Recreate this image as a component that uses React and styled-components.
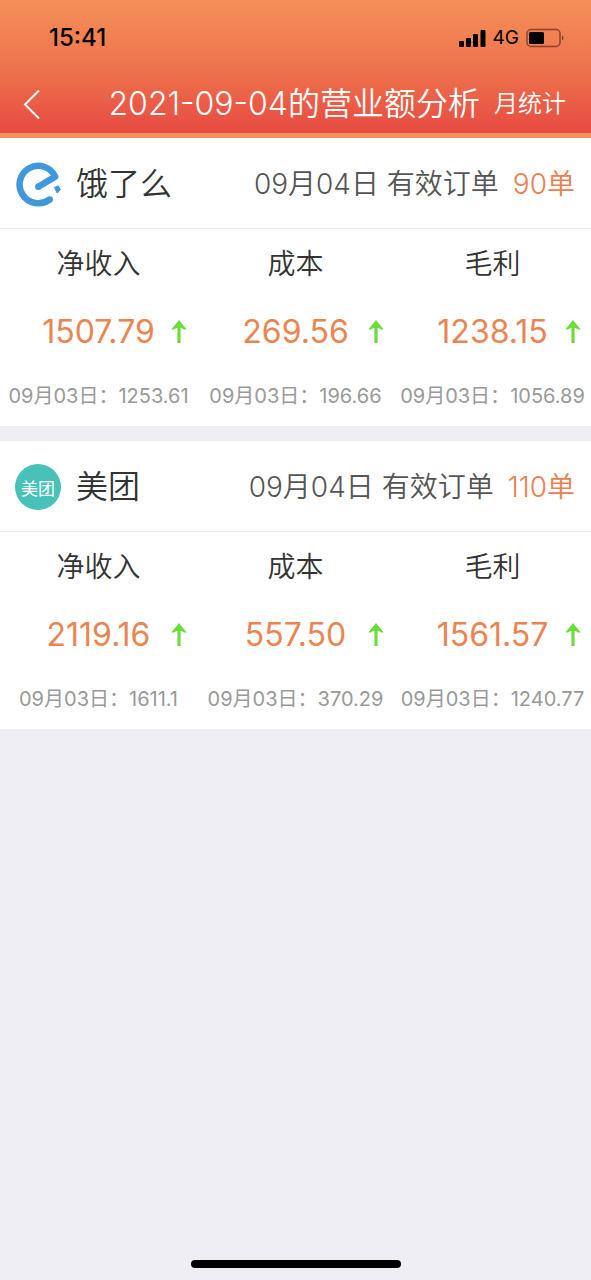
import React from "react";
import styled, { createGlobalStyle } from "styled-components";

const GlobalStyle = createGlobalStyle`
  * {
    box-sizing: border-box;
  }

  body {
    margin: 0;
    background-color: #efeef4;
    font-family: Inter, "Noto Sans CJK SC", sans-serif;
    color: #333;
  }
`;

const Page = styled.div`
  display: flex;
  flex-direction: column;
  min-height: 100vh;
`;

const Header = styled.header`
  background: linear-gradient(#f58f58, #ee744d 50%, #e74a42);
  border-bottom: 5px solid #f3905c;
`;

const StatusBar = styled.div`
  display: flex;
  align-items: center;
  justify-content: space-between;
  height: 75px;
  padding: 0 27px 0 49px;
  color: #000;
`;

const Clock = styled.span`
  font-size: 24px;
  font-weight: 500;
`;

const StatusIcons = styled.div`
  display: flex;
  align-items: center;
  gap: 7px;
  font-size: 19px;
  font-weight: 400;
`;

const NavBar = styled.nav`
  display: flex;
  align-items: center;
  height: 58px;
  padding: 0 25px 0 20px;
  color: #fff;
`;

const BackButton = styled.button`
  display: flex;
  padding: 0;
  border: none;
  background: none;
  color: inherit;
  cursor: pointer;
`;

const Title = styled.h1`
  flex: 1;
  margin: 0 14px 0 0;
  font-size: 32px;
  line-height: 40px;
  font-weight: 350;
  text-align: right;
  white-space: nowrap;
`;

const MonthLink = styled.a`
  font-size: 24px;
  line-height: 40px;
  font-weight: 350;
  color: inherit;
  text-decoration: none;
  white-space: nowrap;
`;

const CardList = styled.main`
  display: flex;
  flex-direction: column;
  flex: 1;
  gap: 15px;
`;

const Card = styled.section`
  background-color: #fff;
`;

const CardHeader = styled.div`
  display: flex;
  align-items: center;
  height: 91px;
  padding: 2px 16px 0 15px;
  border-bottom: 1px solid #e8e8e8;
`;

const ShopName = styled.h2`
  flex: 1;
  margin: 0 0 0 15px;
  font-size: 32px;
  line-height: 40px;
  font-weight: 350;
`;

const Orders = styled.span`
  font-size: 28px;
  line-height: 40px;
  font-weight: 350;
  color: #555;
  white-space: nowrap;
`;

const OrderCount = styled.span`
  margin-left: 14px;
  font-size: 28px;
  line-height: 40px;
  font-weight: 350;
  color: #ea804f;
  white-space: nowrap;
`;

const MeituanLogo = styled.span`
  display: flex;
  align-items: center;
  justify-content: center;
  width: 46px;
  height: 46px;
  border-radius: 50%;
  background-color: #48c2b8;
  color: #fff;
  font-size: 17px;
`;

const Stats = styled.div`
  display: grid;
  grid-template-columns: repeat(3, 1fr);
  padding-top: 1px;
`;

const Stat = styled.div`
  display: flex;
  flex-direction: column;
  min-width: 0;
  text-align: center;
  white-space: nowrap;
`;

const StatLabel = styled.span`
  font-size: 28px;
  line-height: 68px;
  font-weight: 350;
`;

const StatValue = styled.div`
  display: grid;
  grid-template-columns: 36px 1fr 36px;
  align-items: center;
  justify-items: center;
  font-size: 32px;
  line-height: 68px;
  font-weight: 400;
  color: #ea8552;
`;

const Amount = styled.span`
  grid-column: 2;
`;

const Previous = styled.span`
  font-size: 20px;
  line-height: 60px;
  font-weight: 400;
  color: #999;
`;

const HomeBar = styled.div`
  width: 210px;
  height: 8px;
  margin: 0 auto 12px;
  border-radius: 4px;
  background-color: #000;
`;

const SignalIcon = () => (
  <svg width="27" height="18" viewBox="0 0 27 18" fill="currentColor">
    <rect x="0" y="12" width="5" height="6" rx="1" />
    <rect x="7" y="9" width="5" height="9" rx="1" />
    <rect x="14" y="5" width="5" height="13" rx="1" />
    <rect x="21.5" y="1" width="5" height="17" rx="1" />
  </svg>
);

const BatteryIcon = () => (
  <svg width="38" height="20" viewBox="0 0 38 20">
    <rect
      x="1"
      y="1.5"
      width="33"
      height="17"
      rx="4"
      fill="none"
      stroke="#000"
      strokeOpacity="0.45"
      strokeWidth="1.5"
    />
    <rect x="3" y="4" width="15" height="12" rx="1.5" />
    <path d="M36 7.5v5c2-1 2-4 0-5z" fillOpacity="0.5" />
  </svg>
);

const BackIcon = () => (
  <svg
    width="24"
    height="32"
    viewBox="0 0 24 32"
    fill="none"
    stroke="currentColor"
    strokeWidth="2"
  >
    <path d="M19 2.5 5 16.5l14 14" />
  </svg>
);

const ElemeLogo = () => (
  <svg width="46" height="46" viewBox="0 0 46 46" fill="#3f97dc">
    <path
      d="M23.3 25.7 40.2 15.6A18.7 18.7 0 1 0 34.7 38.4"
      fill="none"
      stroke="#3f97dc"
      strokeWidth="6.5"
      strokeLinejoin="round"
    />
    <circle cx="23.3" cy="25.7" r="3.2" />
    <circle cx="34.7" cy="38.4" r="3.2" />
    <path
      d="M39.5 26.5 43.3 24.8 45.3 28.8 42.2 32z"
      stroke="#3f97dc"
      strokeLinejoin="round"
    />
  </svg>
);

const UpArrow = () => (
  <svg width="16" height="24" viewBox="0 0 16 24" fill="#6cdb3c">
    <path d="M8 0 15.5 9.3 14.2 9.8 9.6 7.8V23H6.4V7.8L1.8 9.8.5 9.3z" />
  </svg>
);

const shops = [
  {
    name: "饿了么",
    logo: <ElemeLogo />,
    orders: 90,
    stats: [
      { label: "净收入", value: "1507.79", previous: "1253.61" },
      { label: "成本", value: "269.56", previous: "196.66" },
      { label: "毛利", value: "1238.15", previous: "1056.89" },
    ],
  },
  {
    name: "美团",
    logo: <MeituanLogo>美团</MeituanLogo>,
    orders: 110,
    stats: [
      { label: "净收入", value: "2119.16", previous: "1611.1" },
      { label: "成本", value: "557.50", previous: "370.29" },
      { label: "毛利", value: "1561.57", previous: "1240.77" },
    ],
  },
];

const App = () => {
  return (
    <>
      <GlobalStyle />
      <Page>
        <Header>
          <StatusBar>
            <Clock>15:41</Clock>
            <StatusIcons>
              <SignalIcon />
              4G
              <BatteryIcon />
            </StatusIcons>
          </StatusBar>
          <NavBar>
            <BackButton aria-label="返回">
              <BackIcon />
            </BackButton>
            <Title>2021-09-04的营业额分析</Title>
            <MonthLink href="#">月统计</MonthLink>
          </NavBar>
        </Header>
        <CardList>
          {shops.map((shop) => (
            <Card key={shop.name}>
              <CardHeader>
                {shop.logo}
                <ShopName>{shop.name}</ShopName>
                <Orders>09月04日 有效订单</Orders>
                <OrderCount>{shop.orders}单</OrderCount>
              </CardHeader>
              <Stats>
                {shop.stats.map((stat) => (
                  <Stat key={stat.label}>
                    <StatLabel>{stat.label}</StatLabel>
                    <StatValue>
                      <Amount>{stat.value}</Amount>
                      <UpArrow />
                    </StatValue>
                    <Previous>09月03日：{stat.previous}</Previous>
                  </Stat>
                ))}
              </Stats>
            </Card>
          ))}
        </CardList>
        <HomeBar />
      </Page>
    </>
  );
};

export default App;
